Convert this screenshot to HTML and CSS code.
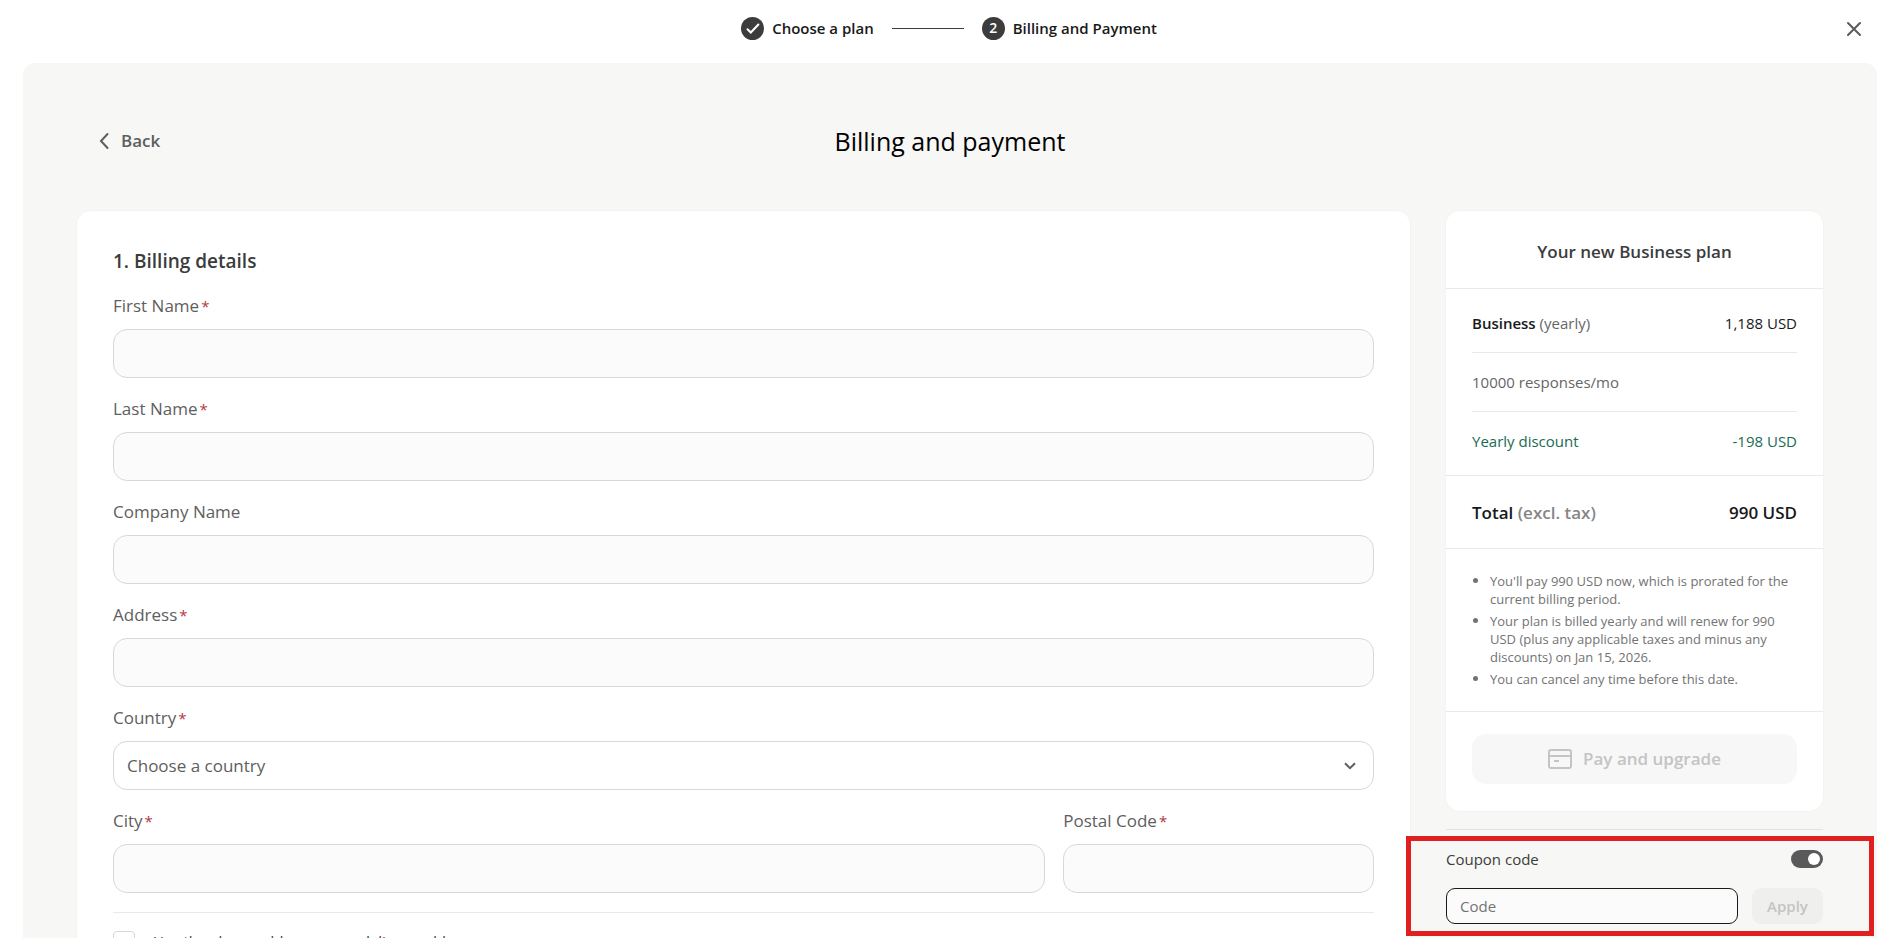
FILE: index.html
```html
<!DOCTYPE html>
<html lang="en">
<head>
<meta charset="utf-8">
<title>Billing and payment</title>
<link rel="stylesheet" href="styles.css">
</head>
<body>
<header class="topbar">
  <ol class="steps">
    <li class="step"><span class="step-mark"><svg viewBox="0 0 23 23" class="step-check"><path d="M6.500 12.200l3.300 3.300 7.600-8"/></svg></span>Choose a plan</li>
    <li class="step-line" aria-hidden="true"></li>
    <li class="step"><span class="step-mark">2</span>Billing and Payment</li>
  </ol>
  <button class="close" type="button" aria-label="Close"><svg viewBox="0 0 16 16" class="close-icon"><path d="M2 2l12 12M14 2L2 14"/></svg></button>
</header>
<main class="panel">
  <div class="panel-head">
    <a class="back" href="#plans"><svg viewBox="0 0 10 18" class="back-icon"><path d="M8.500 2L2 9l6.500 7"/></svg>Back</a>
    <h1 class="title">Billing and payment</h1>
  </div>
  <div class="columns">
    <form class="card form">
      <h2 class="form-title">1. Billing details</h2>
      <div class="field"><label for="first">First Name<span class="req">*</span></label><input class="box" id="first" type="text"></div>
      <div class="field"><label for="last">Last Name<span class="req">*</span></label><input class="box" id="last" type="text"></div>
      <div class="field"><label for="company">Company Name</label><input class="box" id="company" type="text"></div>
      <div class="field"><label for="address">Address<span class="req">*</span></label><input class="box" id="address" type="text"></div>
      <div class="field"><label for="country">Country<span class="req">*</span></label>
        <div class="select-wrap"><select class="box select" id="country"><option>Choose a country</option></select><svg viewBox="0 0 12 8" class="chevron"><path d="M1 1.200l5 5 5-5"/></svg></div></div>
      <div class="split">
        <div class="field"><label for="city">City<span class="req">*</span></label><input class="box" id="city" type="text"></div>
        <div class="field"><label for="postal">Postal Code<span class="req">*</span></label><input class="box" id="postal" type="text"></div>
      </div>
      <div class="consent"><input class="check" type="checkbox" id="consent"><label for="consent">Use the above address as my delivery address</label></div>
    </form>
    <aside class="side">
      <section class="card summary">
        <h2 class="summary-title">Your new Business plan</h2>
        <div class="items">
          <div class="item"><span><b class="strong">Business</b> <span class="muted">(yearly)</span></span><span>1,188 USD</span></div>
          <div class="item muted">10000 responses/mo</div>
          <div class="item discount"><span>Yearly discount</span><span>-198 USD</span></div>
        </div>
        <div class="total"><span>Total <span class="soft">(excl. tax)</span></span><span>990 USD</span></div>
        <ul class="notes">
          <li>You'll pay 990 USD now, which is prorated for the current billing period.</li>
          <li>Your plan is billed yearly and will renew for 990 USD (plus any applicable taxes and minus any discounts) on Jan 15, 2026.</li>
          <li>You can cancel any time before this date.</li>
        </ul>
        <div class="pay-wrap"><button class="pay" type="button" disabled><svg viewBox="0 0 24 20" class="card-icon"><rect x="1" y="1" width="22" height="18" rx="2"/><path d="M1 7h22M6 12h5"/></svg>Pay and upgrade</button></div>
      </section>
      <section class="coupon">
        <div class="coupon-head"><label for="toggle">Coupon code</label><input class="toggle" id="toggle" type="checkbox" role="switch" checked></div>
        <div class="coupon-row"><input class="code" type="text" placeholder="Code" aria-label="Code"><button class="apply" type="button" disabled>Apply</button></div>
        <div class="highlight" aria-hidden="true"></div>
      </section>
    </aside>
  </div>
</main>
</body>
</html>
```
FILE: styles.css
```css
* { box-sizing: border-box; }
body {
  margin: 0;
  height: 100vh;
  overflow: hidden;
  background: #fff;
  color: #191919;
  font-family: "Open Sans", "Noto Sans", sans-serif;
  font-size: 15px;
  line-height: 24px;
}
h1, h2, ol, ul { margin: 0; padding: 0; }
button, input, select { font: inherit; }
svg { fill: none; stroke: currentColor; flex: none; }
.topbar { display: flex; align-items: center; justify-content: center; height: 63px; padding-bottom: 7px; position: relative; }
.steps { display: flex; align-items: center; gap: 18px; list-style: none; font-weight: 600; }
.step { display: flex; align-items: center; gap: 8px; }
.step-mark { display: flex; align-items: center; justify-content: center; width: 23px; height: 23px; border-radius: 50%; background: #3c3c3c; color: #fff; font-size: 14px; }
.step-check { width: 23px; height: 23px; stroke-width: 2; stroke-linecap: round; }
.step-line { width: 72px; height: 1px; background: #3c3c3c; }
.close { position: absolute; right: 36px; top: 21px; display: flex; padding: 0; border: 0; background: none; color: #5a5a5a; }
.close-icon { width: 16px; height: 16px; stroke-width: 2; stroke-linecap: round; }
.panel { margin: 0 21px 0 23px; padding: 60px 54px; border-radius: 12px; background: #f7f7f5; }
.panel-head { display: grid; grid-template-columns: 1fr auto 1fr; align-items: center; height: 36px; margin-bottom: 52px; }
.back { display: flex; align-items: center; gap: 12px; padding-left: 22px; color: #5e5e5e; font-size: 17px; font-weight: 600; text-decoration: none; }
.back-icon { width: 10px; height: 18px; stroke-width: 2; stroke-linecap: round; }
.title { color: #000; font-size: 25px; font-weight: 400; line-height: 36px; }
.columns { display: flex; align-items: flex-start; gap: 36px; }
.card { border-radius: 14px; background: #fff; box-shadow: 0 0 0 1px #f3f3f1; }
.form { flex: 1; padding: 37px 36px; color: #5e5e5e; font-size: 17px; }
.form-title { margin-bottom: 20px; color: #3c3c3c; font-size: 19px; font-weight: 600; line-height: 26px; }
.field { display: flex; flex-direction: column; gap: 11px; margin-bottom: 19px; }
.req { margin-left: 2px; color: #b3373b; font-size: 15px; }
.box { width: 100%; height: 49px; padding: 0 13px; border: 1px solid #d8d8d8; border-radius: 14px; background: #fbfbfb; color: #5e5e5e; }
.select-wrap { display: grid; align-items: center; }
.select-wrap > * { grid-area: 1 / 1; }
.select { appearance: none; background: #fff; }
.chevron { width: 12px; height: 8px; margin-right: 18px; justify-self: end; stroke-width: 2; pointer-events: none; }
.split { display: grid; grid-template-columns: 3fr 1fr; gap: 18px; border-bottom: 1px solid #e9e9e9; }
.consent { display: flex; gap: 18px; padding-top: 18px; color: #3c3c3c; font-size: 15px; line-height: 20px; }
.check { appearance: none; width: 22px; height: 22px; margin: 0; border: 1px solid #d8d8d8; border-radius: 4px; background: #fff; }
.side { width: 377px; }
.summary-title { padding: 28px 0 23px; color: #3c3c3c; font-size: 17px; font-weight: 600; line-height: 26px; text-align: center; }
.items { padding: 5px 26px; border: solid #e9e9e9; border-width: 1px 0; }
.item { display: flex; justify-content: space-between; padding: 17px 0; }
.item + .item { border-top: 1px solid #e9e9e9; }
.strong, .total { font-weight: 600; }
.muted { color: #666; }
.soft { color: #868686; }
.discount { color: #1a6b52; }
.total { display: flex; justify-content: space-between; padding: 25px 26px 23px; font-size: 17px; }
.notes { padding: 23px 26px; border: solid #e9e9e9; border-width: 1px 0; color: #737373; font-size: 13px; line-height: 18px; list-style: none; }
.notes li { position: relative; padding-left: 18px; }
.notes li + li { margin-top: 4px; }
.notes li::before { content: ""; position: absolute; left: 1px; top: 6px; width: 5px; height: 5px; border-radius: 50%; background: currentColor; }
.pay-wrap { padding: 22px 26px 27px; }
.pay { display: flex; align-items: center; justify-content: center; gap: 11px; width: 100%; height: 50px; border: 0; border-radius: 14px; background: #f7f7f7; color: #c4c4c4; font-size: 17px; font-weight: 600; }
.card-icon { width: 24px; height: 20px; stroke-width: 2; }
.coupon { position: relative; margin-top: 18px; padding-top: 17px; border-top: 1px solid #e3e3e2; color: #3c3c3c; }
.coupon-head { display: flex; align-items: center; justify-content: space-between; }
.toggle { appearance: none; display: flex; align-items: center; justify-content: flex-end; width: 32px; height: 18px; margin: 0; padding: 3px; border-radius: 9px; background: #5a5a5a; }
.toggle::before { content: ""; width: 12px; height: 12px; border-radius: 50%; background: #fff; }
.coupon-row { display: flex; gap: 14px; margin-top: 17px; }
.code { flex: 1; min-width: 0; height: 36px; padding: 0 13px; border: 1px solid #191919; border-radius: 9px; background: #fbfbfb; }
.code::placeholder { color: #737373; }
.apply { width: 71px; height: 36px; padding: 0; border: 0; border-radius: 9px; background: #efefee; color: #c4c4c4; font-weight: 600; }
.highlight { position: absolute; top: 6px; left: -40px; right: -51px; height: 100px; border: 5px solid #e02020; pointer-events: none; }
```
